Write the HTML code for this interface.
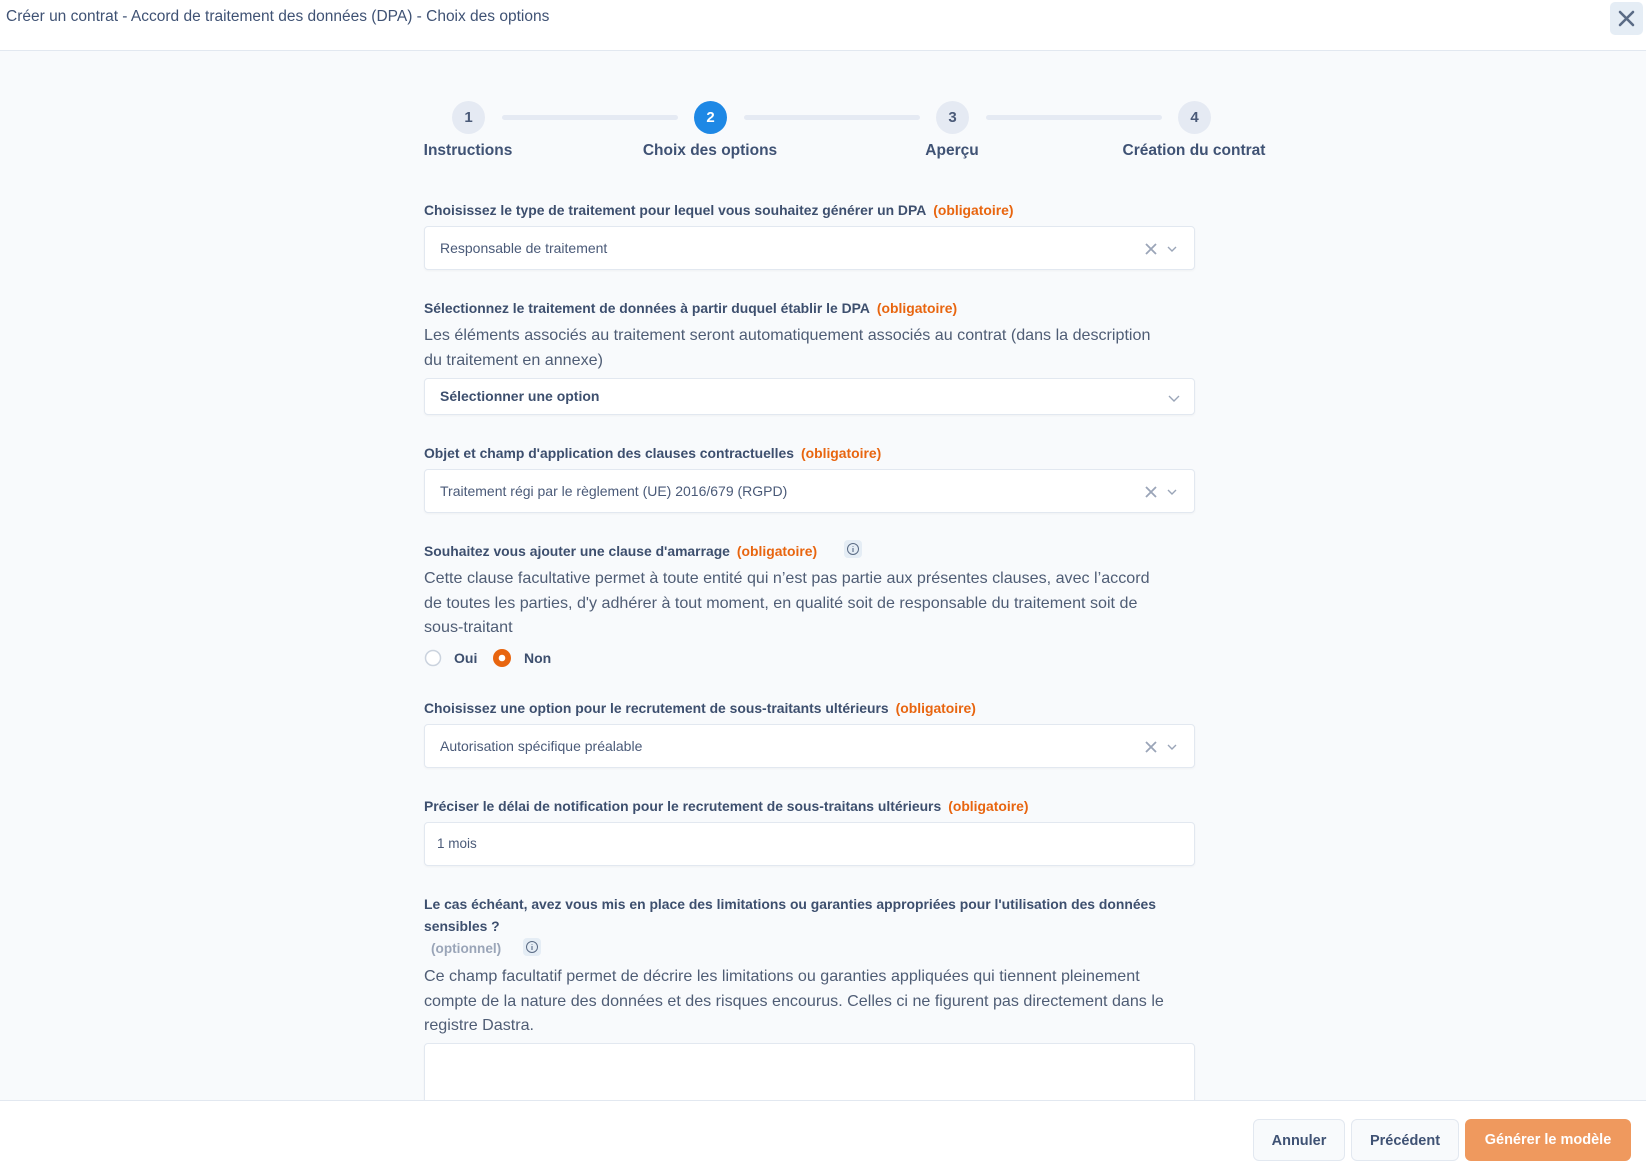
<!DOCTYPE html>
<html><head><meta charset="utf-8"><style>
*{box-sizing:border-box;margin:0;padding:0}
body{width:1646px;height:1171px;overflow:hidden;background:#f8fafc;font-family:"Liberation Sans",sans-serif;color:#3f5274;position:relative}
.a{position:absolute}
.hdr{left:0;top:0;width:1646px;height:51px;background:#fff;border-bottom:1px solid #e2e8f0}
.title{left:6px;top:8px;font-size:15.5px;color:#3f5274}
.close{left:1610px;top:2px;width:33px;height:33px;background:#e5edf5;border-radius:5px}
.circ{width:33px;height:33px;border-radius:50%;background:#e5eaf3;color:#4a5a78;font-weight:bold;font-size:15px;text-align:center;line-height:33px}
.line{height:5px;background:#e5eaf3;border-radius:3px;top:115px}
.slab{top:142px;font-size:15.5px;font-weight:bold;color:#3f5274;text-align:center}
.lbl{left:424px;font-size:13.9px;font-weight:bold;color:#3d4f6e}
.lbl .o{color:#e8650f;margin-left:7px}
.desc{left:424px;width:800px;font-size:16.1px;line-height:24.5px;color:#4f5d75;white-space:nowrap}
.box{left:424px;width:771px;background:#fff;border:1px solid #e2e8f0;border-radius:4px;box-shadow:0 1px 2px rgba(0,0,0,.04)}
.box .t{position:absolute;left:15px;font-size:14px;color:#4a5a78}
.ic{position:absolute;right:12px}
.info{width:18px;height:18px;border-radius:4px;background:#e5edf5}
.btn{top:1119px;height:42px;border-radius:6px;font-weight:bold;font-size:14.5px;text-align:center;line-height:42px}
</style></head><body>
<div class="a hdr"></div>
<div class="a title">Créer un contrat - Accord de traitement des données (DPA) - Choix des options</div>
<div class="a close"><svg width="33" height="33" viewBox="0 0 33 33"><path d="M10 10L23 23M23 10L10 23" stroke="#5a6b85" stroke-width="2.6" stroke-linecap="round"/></svg></div>

<div class="a line" style="left:502px;width:176px"></div>
<div class="a line" style="left:744px;width:176px"></div>
<div class="a line" style="left:986px;width:176px"></div>
<div class="a circ" style="left:452px;top:101px">1</div>
<div class="a circ" style="left:694px;top:101px;background:#1e88e5;color:#fff">2</div>
<div class="a circ" style="left:936px;top:101px">3</div>
<div class="a circ" style="left:1178px;top:101px">4</div>
<div class="a slab" style="left:368px;width:200px">Instructions</div>
<div class="a slab" style="left:610px;width:200px">Choix des options</div>
<div class="a slab" style="left:852px;width:200px">Aperçu</div>
<div class="a slab" style="left:1094px;width:200px">Création du contrat</div>

<div class="a lbl" style="top:202px">Choisissez le type de traitement pour lequel vous souhaitez générer un DPA<span class="o">(obligatoire)</span></div>
<div class="a box" style="top:226px;height:44px"><span class="t" style="top:13px">Responsable de traitement</span>
<svg class="ic" style="top:14px" width="40" height="16" viewBox="0 0 40 16"><path d="M4 3L14 13M14 3L4 13" stroke="#9aa5b8" stroke-width="1.8"/><path d="M26 6L30 10L34 6" stroke="#9aa5b8" stroke-width="1.4" fill="none"/></svg></div>

<div class="a lbl" style="top:300px">Sélectionnez le traitement de données à partir duquel établir le DPA<span class="o">(obligatoire)</span></div>
<div class="a desc" style="top:323px">Les éléments associés au traitement seront automatiquement associés au contrat (dans la description<br>du traitement en annexe)</div>
<div class="a box" style="top:378px;height:37px"><span class="t" style="top:9px;font-weight:bold;color:#3d4f6e">Sélectionner une option</span>
<svg class="ic" style="top:11px" width="16" height="16" viewBox="0 0 16 16"><path d="M3 6L8 11L13 6" stroke="#9aa5b8" stroke-width="1.4" fill="none"/></svg></div>

<div class="a lbl" style="top:445px">Objet et champ d'application des clauses contractuelles<span class="o">(obligatoire)</span></div>
<div class="a box" style="top:469px;height:44px"><span class="t" style="top:13px">Traitement régi par le règlement (UE) 2016/679 (RGPD)</span>
<svg class="ic" style="top:14px" width="40" height="16" viewBox="0 0 40 16"><path d="M4 3L14 13M14 3L4 13" stroke="#9aa5b8" stroke-width="1.8"/><path d="M26 6L30 10L34 6" stroke="#9aa5b8" stroke-width="1.4" fill="none"/></svg></div>

<div class="a lbl" style="top:543px">Souhaitez vous ajouter une clause d'amarrage<span class="o">(obligatoire)</span></div>
<div class="a info" style="left:844px;top:540px"><svg width="18" height="18" viewBox="0 0 18 18"><circle cx="9" cy="9" r="5.5" stroke="#5a6b85" fill="none" stroke-width="1"/><path d="M9 8V12M9 6V6.6" stroke="#5a6b85" stroke-width="1.1"/></svg></div>
<div class="a desc" style="top:566px">Cette clause facultative permet à toute entité qui n’est pas partie aux présentes clauses, avec l’accord<br>de toutes les parties, d'y adhérer à tout moment, en qualité soit de responsable du traitement soit de<br>sous-traitant</div>
<svg class="a" style="left:424px;top:649px" width="20" height="20"><circle cx="9" cy="9" r="7.5" fill="#fff" stroke="#cbd3de" stroke-width="1.5"/></svg>
<div class="a" style="left:454px;top:650px;font-size:14px;font-weight:bold;color:#3d4f6e">Oui</div>
<svg class="a" style="left:493px;top:649px" width="20" height="20"><circle cx="9" cy="9" r="9" fill="#e8650f"/><circle cx="9" cy="9" r="3.3" fill="#fff"/></svg>
<div class="a" style="left:524px;top:650px;font-size:14px;font-weight:bold;color:#3d4f6e">Non</div>

<div class="a lbl" style="top:700px">Choisissez une option pour le recrutement de sous-traitants ultérieurs<span class="o">(obligatoire)</span></div>
<div class="a box" style="top:724px;height:44px"><span class="t" style="top:13px">Autorisation spécifique préalable</span>
<svg class="ic" style="top:14px" width="40" height="16" viewBox="0 0 40 16"><path d="M4 3L14 13M14 3L4 13" stroke="#9aa5b8" stroke-width="1.8"/><path d="M26 6L30 10L34 6" stroke="#9aa5b8" stroke-width="1.4" fill="none"/></svg></div>

<div class="a lbl" style="top:798px">Préciser le délai de notification pour le recrutement de sous-traitans ultérieurs<span class="o">(obligatoire)</span></div>
<div class="a box" style="top:822px;height:44px"><span class="t" style="top:13px;left:12px;font-size:13.5px">1 mois</span></div>

<div class="a lbl" style="top:893px;width:800px;line-height:22px;white-space:nowrap">Le cas échéant, avez vous mis en place des limitations ou garanties appropriées pour l'utilisation des données<br>sensibles ?</div>
<div class="a" style="left:431px;top:941px;font-size:13.6px;font-weight:bold;color:#9aa5b8">(optionnel)</div>
<div class="a info" style="left:523px;top:938px"><svg width="18" height="18" viewBox="0 0 18 18"><circle cx="9" cy="9" r="5.5" stroke="#5a6b85" fill="none" stroke-width="1"/><path d="M9 8V12M9 6V6.6" stroke="#5a6b85" stroke-width="1.1"/></svg></div>
<div class="a desc" style="top:964px">Ce champ facultatif permet de décrire les limitations ou garanties appliquées qui tiennent pleinement<br>compte de la nature des données et des risques encourus. Celles ci ne figurent pas directement dans le<br>registre Dastra.</div>
<div class="a box" style="top:1043px;height:80px"></div>

<div class="a" style="left:0;top:1100px;width:1646px;height:71px;background:#fff;border-top:1px solid #e2e8f0"></div>
<div class="a btn" style="left:1253px;width:92px;background:#f8fafc;border:1px solid #e2e8f0;color:#3f5274">Annuler</div>
<div class="a btn" style="left:1351px;width:108px;background:#f8fafc;border:1px solid #e2e8f0;color:#3f5274">Précédent</div>
<div class="a btn" style="left:1465px;width:166px;background:#ef995e;color:#fff">Générer le modèle</div>
</body></html>
